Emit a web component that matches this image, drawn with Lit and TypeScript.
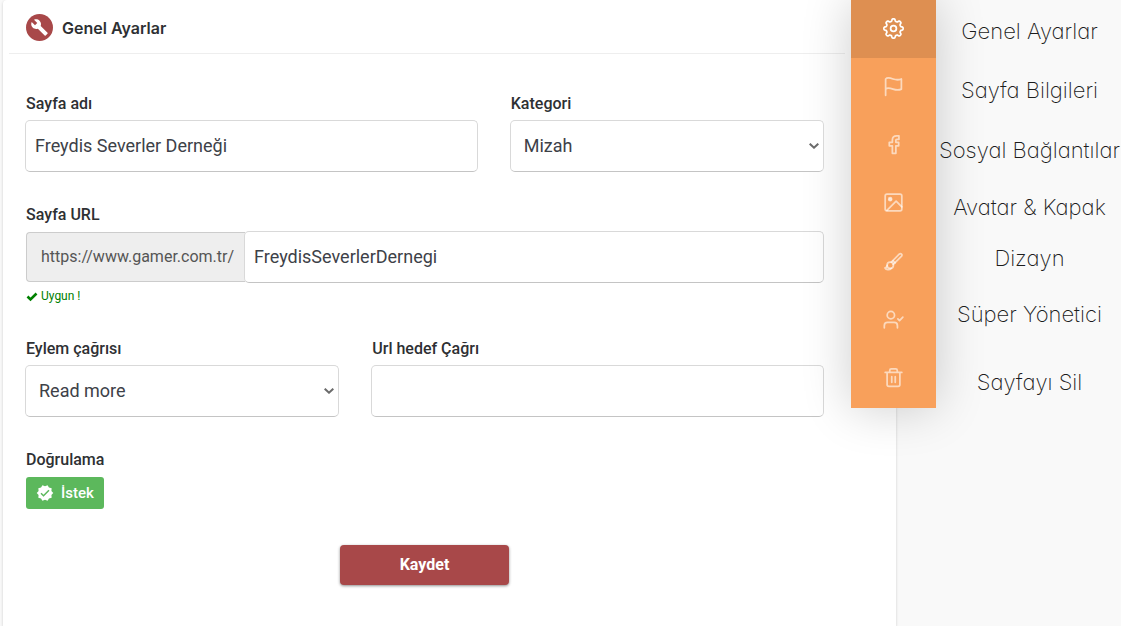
import { LitElement, html, css, svg } from "lit";
import { customElement, property } from "lit/decorators.js";
import { classMap } from "lit/directives/class-map.js";

/* Eight-lobed cog outline on a 24px grid. */
const cogPath = (() => {
  const points: string[] = [];
  const steps = 160;
  for (let i = 0; i < steps; i++) {
    const a = (i / steps) * Math.PI * 2;
    const r = 9.7 + 1.3 * Math.tanh(2 * Math.cos(8 * a));
    points.push(`${(12 + r * Math.sin(a)).toFixed(2)} ${(12 - r * Math.cos(a)).toFixed(2)}`);
  }
  return `M${points.join("L")}Z`;
})();

const icons: Record<string, unknown> = {
  cog: svg`<path d=${cogPath} /><circle cx="12" cy="12" r="3.3" />`,
  flag: svg`<path d="M3 22V3.400C4 2.300 7.500 2 11.500 3.400s6.500 1.200 9.500 0V15c-3 1.400-5.500 1.300-9.500 0s-7.500-1.200-8.500 .2" />`,
  facebook: svg`<path d="M18.200 2h-2.700c-3 0-4.800 1.800-4.800 4.800v2.700H7.200v4h3.500V22h4v-8.500h3.200v-4h-3.200V7.200c0-.8.400-1.200 1.200-1.200h2.300V2z" />`,
  image: svg`<rect x="2.500" y="2.500" width="19" height="19" rx="2" /><circle cx="8.200" cy="8.200" r="1.700" fill="currentColor" /><path d="M4.500 21 15 10.500l6.500 6.500" />`,
  brush: svg`<path d="m9.500 12.700 9-9c2-1.800 4.200.4 2.500 2.400l-9.200 9.200" /><path d="m11.500 11.200 2.300 2.300" /><circle cx="8.300" cy="16.300" r="3.600" /><path d="M4.800 16.500c-.3 2-1 2.700-2.500 2.900 1.200 2.100 5 2.600 7.200.4" />`,
  user: svg`<circle cx="9" cy="7" r="4.200" /><path d="M1.500 21.500V19c0-2.200 1.500-3.700 3.700-3.700h7.600c2.200 0 3.700 1.500 3.700 3.700v2.500" /><path d="m17 11.300 1.900 1.900 3.800-3.900" />`,
  trash: svg`<path d="M2.500 6.200h19M4.700 6.200V20c0 1.200.8 2 2 2h10.600c1.200 0 2-.8 2-2V6.200M7.700 6V4c0-1.200.6-1.800 1.800-1.800h5c1.200 0 1.800.6 1.800 1.800v2M10 11v6.500M14 11v6.500" />`,
};

const sections = [
  { icon: "cog", label: "Genel Ayarlar" },
  { icon: "flag", label: "Sayfa Bilgileri" },
  { icon: "facebook", label: "Sosyal Bağlantılar" },
  { icon: "image", label: "Avatar & Kapak" },
  { icon: "brush", label: "Dizayn" },
  { icon: "user", label: "Süper Yönetici" },
  { icon: "trash", label: "Sayfayı Sil" },
];

@customElement("settings-rail")
class SettingsRail extends LitElement {
  @property({ type: Number }) active = 0;

  static styles = css`
    :host {
      display: block;
    }
    .rail {
      display: flex;
      flex-direction: column;
      height: 408px;
      background: #f8a05b;
      box-shadow: 0 0 50px rgba(0, 0, 0, 0.2);
    }
    .item {
      flex: 1;
      display: flex;
      align-items: center;
      justify-content: center;
      padding: 0 0 2px;
      color: rgba(255, 255, 255, 0.6);
    }
    .item.active {
      background: #de8f51;
      color: #fff;
    }
    .icon {
      width: 21px;
      height: 21px;
      fill: none;
      stroke: currentColor;
      stroke-width: 2;
      stroke-linecap: round;
      stroke-linejoin: round;
      overflow: visible;
    }
  `;

  render() {
    return html`<nav class="rail">
      ${sections.map(
        (s, i) => html`<a href="#" class=${classMap({ item: true, active: i === this.active })} aria-label=${s.label}>
          <svg class="icon" viewBox="0 0 24 24">${icons[s.icon]}</svg>
        </a>`
      )}
    </nav>`;
  }
}

@customElement("app-root")
class AppRoot extends LitElement {
  static styles = css`
    :host {
      display: block;
      min-height: 100vh;
      background: #f9f9f9;
      font-family: Roboto, "Liberation Sans", sans-serif;
      color: #2e3033;
    }
    * {
      box-sizing: border-box;
    }
    .page {
      display: grid;
      grid-template-columns: minmax(0, 1fr) 45px 40px 185px;
      min-height: 100vh;
      padding-left: 3px;
      overflow: hidden;
    }
    .card {
      grid-column: 1 / 3;
      grid-row: 1;
      padding-right: 45px;
      background: #fff;
      border-radius: 4px 4px 0 0;
      box-shadow: 0 1px 3px rgba(0, 0, 0, 0.18);
    }
    .rail {
      grid-column: 2 / 4;
      grid-row: 1;
      align-self: start;
    }
    .labels {
      grid-column: 4;
      grid-row: 1;
      display: grid;
      grid-template-rows: 62px 56px 64px 50px 52px 60px 76px;
      align-content: start;
      align-items: center;
      justify-content: center;
      justify-items: center;
      z-index: 1;
      padding-left: 2px;
      font: 200 22px/32px Inter, Lato, sans-serif;
      font-feature-settings: "cv11";
      white-space: nowrap;
    }
    .labels a {
      color: #1c1c1c;
      text-decoration: none;
    }
    .header {
      display: flex;
      align-items: center;
      gap: 9px;
      height: 54px;
      margin: 0 6px;
      padding: 2px 0 0 17px;
      border-bottom: 1px solid #eeeeee;
    }
    .badge {
      width: 27px;
      height: 27px;
    }
    .title {
      margin: 0;
      font: 600 16px/24px Inter, sans-serif;
    }
    .form {
      display: grid;
      grid-template-columns: repeat(12, minmax(0, 1fr));
      gap: 33px 32px;
      padding: 40px 27px 41px 22px;
    }
    .w5 {
      grid-column: span 5;
    }
    .w7 {
      grid-column: span 7;
    }
    .w12 {
      grid-column: span 12;
    }
    .label {
      display: block;
      margin: 0 0 6px 1px;
      font-size: 16px;
      line-height: 20px;
      font-weight: 500;
    }
    .control {
      display: block;
      width: 100%;
      height: 52px;
      padding: 0 9px 2px;
      border: 1px solid #d9d9d9;
      border-bottom-color: #c4c4c4;
      border-radius: 5px;
      background: #fff;
      color: #3d4148;
      font: 400 18px/24px Roboto, "Liberation Sans", sans-serif;
      outline: none;
    }
    .select {
      position: relative;
      display: grid;
      align-items: center;
    }
    .select .control {
      appearance: none;
      padding: 0 24px 0 13px;
    }
    .chevron {
      position: absolute;
      right: 5px;
      width: 10px;
      height: 6px;
      fill: none;
      stroke: #6b6b6b;
      stroke-width: 2;
      pointer-events: none;
    }
    .control.grow {
      flex: 1;
      width: auto;
      min-width: 0;
      margin-left: -1px;
    }
    .group {
      display: flex;
      align-items: center;
      padding-left: 1px;
    }
    .prefix {
      height: 50px;
      padding: 0 11px 0 14px;
      border: 1px solid #cccccc;
      border-right: 0;
      border-radius: 4px 0 0 4px;
      background: #eeeeee;
      color: #555;
      font-size: 16px;
      line-height: 48px;
    }
    .hint {
      display: flex;
      align-items: center;
      gap: 3px;
      margin: 4px 0 0 1px;
      color: #008000;
      font-size: 12px;
      line-height: 19px;
    }
    .tick {
      width: 12px;
      height: 12px;
    }
    .request {
      display: flex;
      align-items: center;
      gap: 7px;
      height: 32px;
      margin: 7px 0 0 1px;
      padding: 0 10px;
      border: 0;
      border-radius: 3px;
      background: #5cb85c;
      color: #fff;
      font: 500 15px/20px Roboto, sans-serif;
    }
    .verified {
      width: 18px;
      height: 18px;
    }
    .actions {
      display: flex;
      justify-content: center;
      padding-top: 3px;
    }
    .save {
      width: 169px;
      height: 40px;
      border: 0;
      border-radius: 4px;
      background: #a84849;
      color: #fff;
      font: 700 16px/24px Roboto, sans-serif;
      box-shadow: 0 1px 3px rgba(0, 0, 0, 0.45);
    }
  `;

  private select(id: string, option: string) {
    return html`<div class="select">
      <select class="control" id=${id}><option>${option}</option></select>
      <svg class="chevron" viewBox="0 0 10 6"><path d="m.7.700 4.300 4 4.300-4" /></svg>
    </div>`;
  }

  render() {
    return html`<div class="page">
      <main class="card">
        <header class="header">
          <svg class="badge" viewBox="0 0 27 27">
            <circle cx="13.500" cy="13.500" r="13.500" fill="#a84849" />
            <g transform="translate(4.500 4.500) scale(.75)">
              <path fill="#fff" d="M22.700 19l-9.100-9.100c.9-2.300.4-5-1.500-6.900-2-2-5-2.400-7.400-1.300L9 6 6 9 1.600 4.700C.4 7.100.9 10.100 2.900 12.100c1.900 1.900 4.600 2.400 6.900 1.500l9.100 9.100c.4.4 1 .4 1.400 0l2.300-2.300c.5-.4.5-1.100.1-1.400z" />
            </g>
          </svg>
          <h1 class="title">Genel Ayarlar</h1>
        </header>
        <form class="form">
          <div class="w7">
            <label class="label" for="name">Sayfa adı</label>
            <input class="control" id="name" type="text" value="Freydis Severler Derneği" />
          </div>
          <div class="w5">
            <label class="label" for="category">Kategori</label>
            ${this.select("category", "Mizah")}
          </div>
          <div class="w12">
            <label class="label" for="url">Sayfa URL</label>
            <div class="group">
              <span class="prefix">https://www.gamer.com.tr/</span>
              <input class="control grow" id="url" type="text" value="FreydisSeverlerDernegi" />
            </div>
            <div class="hint">
              <svg class="tick" viewBox="0 0 12 12"><path d="m1.500 5.500 3 3 6-6" fill="none" stroke="currentColor" stroke-width="2.600" /></svg>
              <span>Uygun !</span>
            </div>
          </div>
          <div class="w5">
            <label class="label" for="action">Eylem çağrısı</label>
            ${this.select("action", "Read more")}
          </div>
          <div class="w7">
            <label class="label" for="target">Url hedef Çağrı</label>
            <input class="control" id="target" type="text" />
          </div>
          <div class="w12">
            <label class="label" for="verify">Doğrulama</label>
            <button class="request" id="verify" type="button">
              <svg class="verified" viewBox="0 0 24 24">
                <path fill="currentColor" d="m23 12-2.440-2.780.34-3.680-3.610-.82-1.890-3.180L12 3 8.600 1.540 6.710 4.720l-3.610.81.34 3.680L1 12l2.440 2.780-.34 3.690 3.610.82 1.890 3.180L12 21l3.400 1.460 1.890-3.180 3.610-.82-.34-3.680L23 12zm-13 5-4-4 1.410-1.410L10 14.170l6.590-6.590L18 9l-8 8z" />
              </svg>
              <span>İstek</span>
            </button>
          </div>
          <div class="w12 actions">
            <button class="save" type="button">Kaydet</button>
          </div>
        </form>
      </main>
      <settings-rail class="rail"></settings-rail>
      <nav class="labels">${sections.map((s) => html`<a href="#">${s.label}</a>`)}</nav>
    </div>`;
  }
}
